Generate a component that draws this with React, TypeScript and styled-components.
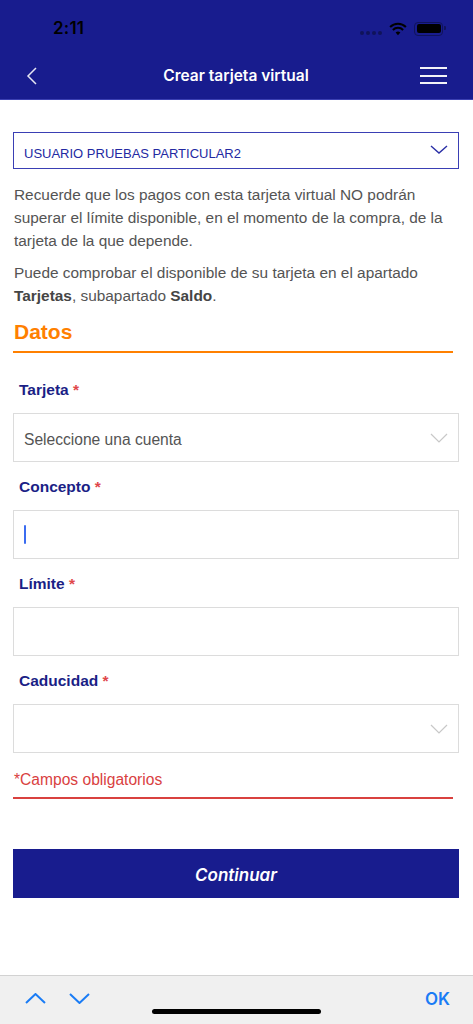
import React from 'react'
import styled, { createGlobalStyle } from 'styled-components'

const color = {
  navy: '#181c8e',
  navyLine: '#3b40b2',
  label: '#1b1f86',
  text: '#545454',
  orange: '#ff8000',
  red: '#d9413f',
  border: '#dcdcdc',
  iosBlue: '#1a7cf5',
}

const GlobalStyle = createGlobalStyle`
  html, body {
    margin: 0;
    padding: 0;
    background: #ffffff;
  }
  body {
    font-family: 'Liberation Sans', Arial, sans-serif;
  }
  * {
    box-sizing: border-box;
  }
`

const Chevron: React.FC<{ stroke: string; up?: boolean; w?: number; h?: number; sw?: number }> = ({
  stroke,
  up,
  w = 18,
  h = 9,
  sw = 1.4,
}) => (
  <svg width={w} height={h} viewBox={`0 0 ${w} ${h}`} fill="none">
    {up ? (
      <polyline points={`1,${h - 1} ${w / 2},1 ${w - 1},${h - 1}`} stroke={stroke} strokeWidth={sw} />
    ) : (
      <polyline points={`1,1 ${w / 2},${h - 1} ${w - 1},1`} stroke={stroke} strokeWidth={sw} />
    )}
  </svg>
)

const App: React.FC = () => {
  const fields = [
    { label: 'Concepto', kind: 'input', focused: true },
    { label: 'Límite', kind: 'input' },
    { label: 'Caducidad', kind: 'select' },
  ]

  return (
    <Page>
      <GlobalStyle />
      <Header>
        <StatusBar>
          <Clock>2:11</Clock>
          <StatusIcons>
            <Dots>
              <span />
              <span />
              <span />
              <span />
            </Dots>
            <svg width="18" height="14" viewBox="0 0 18 14">
              <path d="M9 13.2 L6.6 10.6 A3.4 3.4 0 0 1 11.4 10.6 Z" fill="#000" />
              <path d="M3.9 7.9 A7.3 7.3 0 0 1 14.1 7.9" stroke="#000" strokeWidth="2.1" fill="none" />
              <path d="M1.1 4.9 A11.3 11.3 0 0 1 16.9 4.9" stroke="#000" strokeWidth="2.1" fill="none" />
            </svg>
            <Battery>
              <BatteryFill />
            </Battery>
          </StatusIcons>
        </StatusBar>
        <NavBar>
          <svg width="12" height="18" viewBox="0 0 12 18">
            <polyline points="10,1 2,9 10,17" stroke="#e6e6f2" strokeWidth="1.5" fill="none" />
          </svg>
          <NavTitle>Crear tarjeta virtual</NavTitle>
          <Burger>
            <span />
            <span />
            <span />
          </Burger>
        </NavBar>
      </Header>

      <Content>
        <UserSelect>
          <span>USUARIO PRUEBAS PARTICULAR2</span>
          <Chevron stroke="#2a2fa6" />
        </UserSelect>

        <Paragraph>
          Recuerde que los pagos con esta tarjeta virtual NO podrán superar el límite disponible, en el
          momento de la compra, de la tarjeta de la que depende.
        </Paragraph>
        <Paragraph>
          Puede comprobar el disponible de su tarjeta en el apartado <b>Tarjetas</b>, subapartado{' '}
          <b>Saldo</b>.
        </Paragraph>

        <SectionTitle>Datos</SectionTitle>

        <Fields>
          <Field>
            <Label>
              Tarjeta <Req>*</Req>
            </Label>
            <Box>
              <Placeholder>Seleccione una cuenta</Placeholder>
              <Chevron stroke="#c8c8c8" w={18} h={10} sw={1.2} />
            </Box>
          </Field>
          {fields.map((f) => (
            <Field key={f.label}>
              <Label>
                {f.label} <Req>*</Req>
              </Label>
              <Box>
                {f.focused ? <Caret /> : <span />}
                {f.kind === 'select' && <Chevron stroke="#c8c8c8" w={18} h={10} sw={1.2} />}
              </Box>
            </Field>
          ))}
        </Fields>

        <Required>*Campos obligatorios</Required>

        <Button>Continuar</Button>
      </Content>

      <Toolbar>
        <ToolbarArrows>
          <Chevron stroke={color.iosBlue} up w={21} h={11} sw={2} />
          <Chevron stroke={color.iosBlue} w={21} h={11} sw={2} />
        </ToolbarArrows>
        <OkButton>OK</OkButton>
        <HomeIndicator />
      </Toolbar>
    </Page>
  )
}

export default App

const Page = styled.div`
  width: 473px;
  height: 1024px;
  display: flex;
  flex-direction: column;
  overflow: hidden;
`

const Header = styled.header`
  background: ${color.navy};
  height: 100px;
  border-bottom: 1.5px solid ${color.navyLine};
  display: flex;
  flex-direction: column;
`

const StatusBar = styled.div`
  height: 54px;
  padding: 0 30px 0 53px;
  display: flex;
  align-items: center;
  justify-content: space-between;
`

const Clock = styled.span`
  font-family: Inter, 'Liberation Sans', sans-serif;
  font-size: 17px;
  font-weight: 600;
  color: #000;
  letter-spacing: 0.2px;
  margin-top: 1px;
`

const StatusIcons = styled.div`
  display: flex;
  align-items: center;
  gap: 7px;
  margin-top: 3px;
`

const Dots = styled.div`
  display: flex;
  gap: 2px;
  margin-top: 8px;

  & > span {
    width: 4px;
    height: 4px;
    border-radius: 50%;
    background: #10135a;
  }
`

const Battery = styled.div`
  position: relative;
  width: 29px;
  height: 14px;
  border: 1.5px solid #10135a;
  border-radius: 4px;
  padding: 1.5px;

  &::after {
    content: '';
    position: absolute;
    right: -4px;
    top: 3.5px;
    width: 2px;
    height: 4px;
    border-radius: 0 1px 1px 0;
    background: #10135a;
  }
`

const BatteryFill = styled.div`
  width: 100%;
  height: 100%;
  background: #000;
  border-radius: 2px;
`

const NavBar = styled.div`
  flex: 1;
  padding: 0 26px 2px 26px;
  display: flex;
  align-items: center;
  justify-content: space-between;
`

const NavTitle = styled.h1`
  margin: 0 0 0 14px;
  font-family: Inter, 'Liberation Sans', sans-serif;
  font-size: 15.5px;
  font-weight: 600;
  color: #ffffff;
`

const Burger = styled.div`
  width: 27px;
  display: flex;
  flex-direction: column;
  gap: 5.5px;

  & > span {
    height: 2px;
    background: #f2f2f8;
  }
`

const Content = styled.main`
  flex: 1;
  padding: 32px 14px 0 13px;
  display: flex;
  flex-direction: column;
`

const UserSelect = styled.div`
  height: 37px;
  border: 1px solid #3a3fb4;
  padding: 0 10px 0 10px;
  display: flex;
  align-items: center;
  justify-content: space-between;
  font-size: 13px;
  color: #2329a2;

  & > span {
    margin-top: 5px;
  }
  & > svg {
    margin-top: -2px;
  }
`

const Paragraph = styled.p`
  margin: 14px 0 -5px 1px;
  font-size: 15.4px;
  line-height: 23px;
  color: ${color.text};

  & + & {
    margin-top: 14px;
  }

  & b {
    color: #454545;
  }
`

const SectionTitle = styled.h2`
  margin: 17px 6px 0 0;
  padding: 0 0 6px 1px;
  font-size: 21px;
  line-height: 26px;
  font-weight: bold;
  color: ${color.orange};
  border-bottom: 2px solid ${color.orange};
`

const Fields = styled.div`
  margin-top: 12px;
  display: flex;
  flex-direction: column;
`

const Field = styled.div`
  display: flex;
  flex-direction: column;
`

const Label = styled.label`
  margin: 15px 0 13px 6px;
  font-size: 15.5px;
  line-height: 20px;
  font-weight: bold;
  color: ${color.label};
`

const Req = styled.span`
  color: #e0474a;
  font-weight: bold;
`

const Box = styled.div`
  height: 49px;
  border: 1.5px solid ${color.border};
  padding: 0 10px;
  display: flex;
  align-items: center;
  justify-content: space-between;
`

const Placeholder = styled.span`
  font-size: 15.6px;
  color: ${color.text};
  margin-top: 4px;
`

const Caret = styled.span`
  width: 2px;
  height: 19px;
  background: #3b6cf0;
  border-radius: 1px;
`

const Required = styled.div`
  margin: 17px 6px 0 0;
  padding: 0 0 7px 1px;
  font-size: 15.6px;
  line-height: 20px;
  color: ${color.red};
  border-bottom: 2px solid ${color.red};
`

const Button = styled.button`
  margin-top: 50px;
  height: 49px;
  border: none;
  background: ${color.navy};
  color: #ffffff;
  font-family: Inter, 'Liberation Sans', sans-serif;
  font-size: 17px;
  font-style: italic;
  font-weight: 600;
  padding-top: 4px;
`

const Toolbar = styled.footer`
  position: relative;
  height: 49px;
  background: #f0f0f0;
  border-top: 1px solid #d2d2d2;
  padding: 0 23px 0 25px;
  display: flex;
  align-items: center;
  justify-content: space-between;
`

const ToolbarArrows = styled.div`
  display: flex;
  gap: 23px;
  margin-top: -3px;
`

const OkButton = styled.span`
  font-family: Inter, 'Liberation Sans', sans-serif;
  font-size: 17px;
  font-weight: 600;
  color: ${color.iosBlue};
  margin-top: -3px;
`

const HomeIndicator = styled.div`
  position: absolute;
  left: 152px;
  bottom: 10px;
  width: 169px;
  height: 5px;
  border-radius: 3px;
  background: #000;
`
